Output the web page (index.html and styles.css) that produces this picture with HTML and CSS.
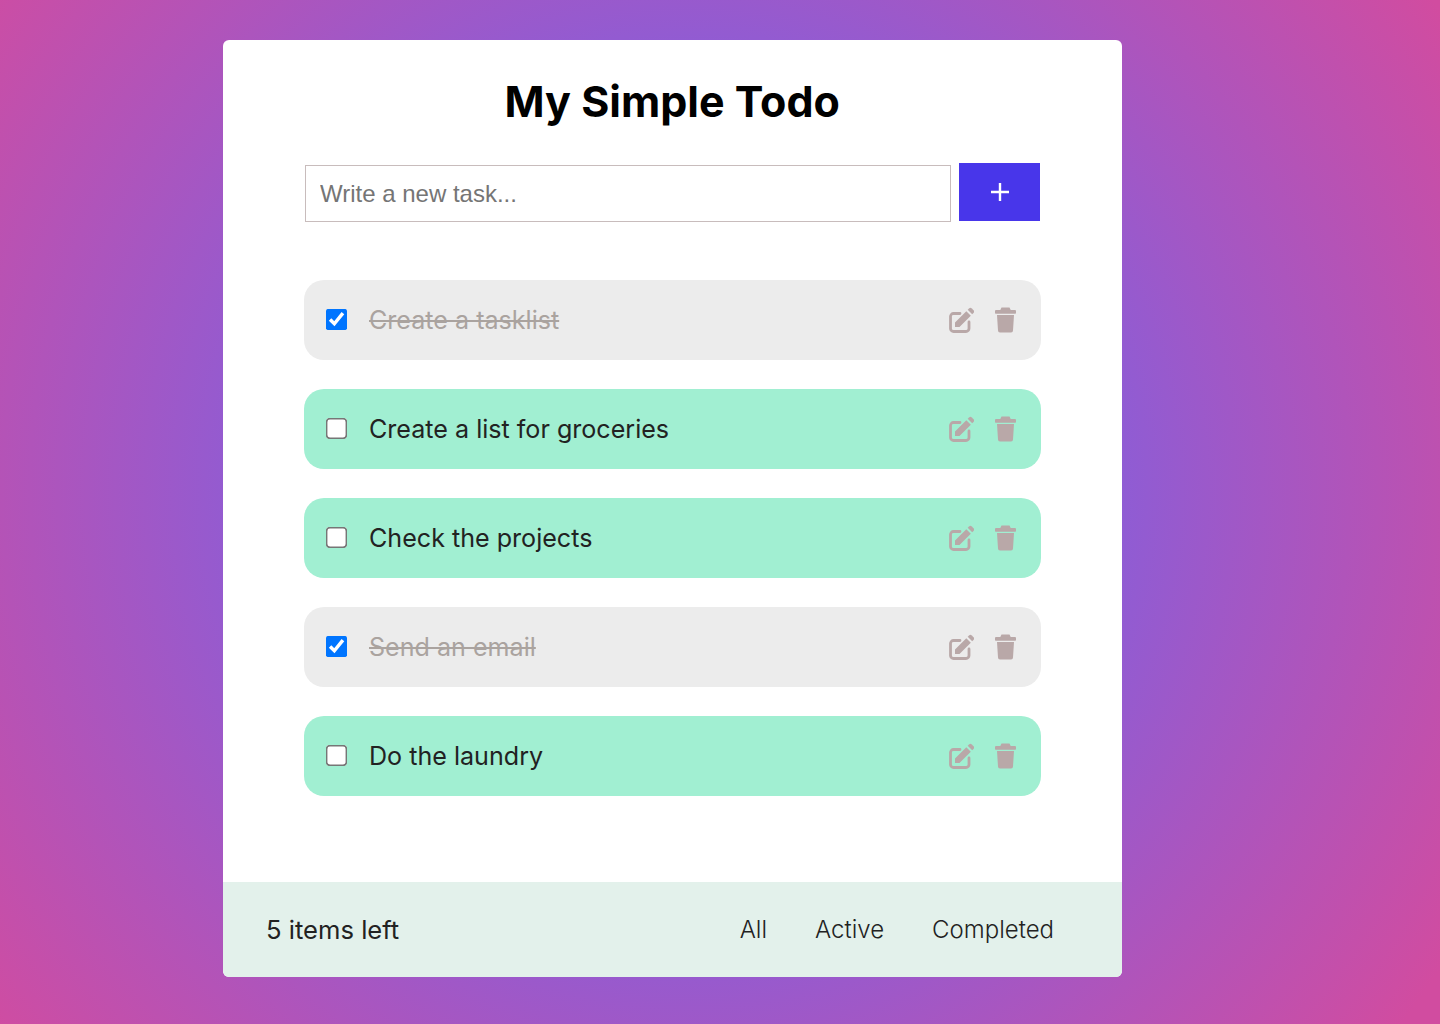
FILE: index.html
```html
<!DOCTYPE html>
<html>
<head>
  <title>My Simple Todo</title>
  <link rel="stylesheet" href="styles.css">
</head>
<body>
  <div class="card">
    <div class="content">
      <h1>My Simple Todo</h1>

      <form class="new-task">
        <input class="new-task-input" type="text" placeholder="Write a new task...">
        <button class="add-btn" type="button" aria-label="Add task">
          <svg width="20" height="20" viewBox="0 0 20 20"><path d="M10 1v18M1 10h18" stroke="#fff" stroke-width="2.4"/></svg>
        </button>
      </form>

      <ul class="tasks">
        <li class="task done">
          <input type="checkbox" checked>
          <span class="task-text">Create a tasklist</span>
          <svg class="icon" width="25" height="26"><use href="#edit"/></svg>
          <svg class="icon" width="21" height="26"><use href="#trash"/></svg>
        </li>
        <li class="task">
          <input type="checkbox">
          <span class="task-text">Create a list for groceries</span>
          <svg class="icon" width="25" height="26"><use href="#edit"/></svg>
          <svg class="icon" width="21" height="26"><use href="#trash"/></svg>
        </li>
        <li class="task">
          <input type="checkbox">
          <span class="task-text">Check the projects</span>
          <svg class="icon" width="25" height="26"><use href="#edit"/></svg>
          <svg class="icon" width="21" height="26"><use href="#trash"/></svg>
        </li>
        <li class="task done">
          <input type="checkbox" checked>
          <span class="task-text">Send an email</span>
          <svg class="icon" width="25" height="26"><use href="#edit"/></svg>
          <svg class="icon" width="21" height="26"><use href="#trash"/></svg>
        </li>
        <li class="task">
          <input type="checkbox">
          <span class="task-text">Do the laundry</span>
          <svg class="icon" width="25" height="26"><use href="#edit"/></svg>
          <svg class="icon" width="21" height="26"><use href="#trash"/></svg>
        </li>
      </ul>
    </div>

    <div class="footer">
      <span class="count">5 items left</span>
      <div class="filters">
        <a>All</a>
        <a>Active</a>
        <a>Completed</a>
      </div>
    </div>
  </div>

  <svg class="defs" width="0" height="0">
    <symbol id="edit" viewBox="0 0 25 26">
      <path d="M20 15v6.500a3 3 0 0 1-3 3H4.500a3 3 0 0 1-3-3V9.500a3 3 0 0 1 3-3H11" fill="none" stroke="currentColor" stroke-width="2.800" stroke-linecap="round"/>
      <path d="M6 15.500L17.300 4.200l4.500 4.500L10.500 20H6z" fill="currentColor"/>
      <path d="M18.700 2.800l1.300-1.300a2 2 0 0 1 2.800 0l1.700 1.700a2 2 0 0 1 0 2.800l-1.300 1.300z" fill="currentColor"/>
    </symbol>
    <symbol id="trash" viewBox="0 0 21 26">
      <path d="M6.500.5h8l1.200 2.500H20a1 1 0 0 1 1 1v2a.8.8 0 0 1-.8.8H.8A.8.8 0 0 1 0 6V4a1 1 0 0 1 1-1h4.300z" fill="currentColor"/>
      <path d="M2 8h17l-1 15.500a2 2 0 0 1-2 2H5a2 2 0 0 1-2-2z" fill="currentColor"/>
    </symbol>
  </svg>
</body>
</html>
```

FILE: styles.css
```css
* { box-sizing: border-box; }
html, body { height: 100%; }
body {
  margin: 0;
  padding-top: 40px;
  font-family: Inter, sans-serif;
  background: radial-gradient(circle at 690px 490px, #8f5cd4 430px, #d14ca0 890px);
  overflow: hidden;
}
.card {
  width: 898.500px;
  height: 937px;
  margin-left: 223px;
  background: #fff;
  border-radius: 6px;
  overflow: hidden;
  display: flex;
  flex-direction: column;
}
.content { flex: 1; padding: 0 81px; }
h1 {
  margin: 32px 0 0;
  font-size: 43px;
  line-height: 58px;
  font-weight: 700;
  text-align: center;
  color: #000;
}
.new-task { display: flex; gap: 8px; align-items: flex-start; margin-top: 33px; padding-left: 1px; }
.new-task-input {
  width: 646px;
  height: 57px;
  margin-top: 2px;
  padding: 0 14px;
  border: 1px solid #c8bcbc;
  font-family: "Liberation Sans", Arial, sans-serif;
  font-size: 24px;
  outline: none;
}
.new-task-input::placeholder { color: #757575; }
.add-btn {
  width: 81px;
  height: 58px;
  padding: 0;
  border: none;
  background: #4836ea;
  display: flex;
  align-items: center;
  justify-content: center;
}
.tasks { list-style: none; margin: 58px 0 0; padding: 0; display: flex; flex-direction: column; gap: 29px; }
.task {
  height: 80px;
  padding: 0 25px 0 22px;
  display: flex;
  align-items: center;
  background: #a1efd2;
  border-radius: 20px;
  color: #222;
  font-size: 25.100px;
}
.task.done { background: #ececec; }
.task input {
  width: 13px;
  height: 13px;
  margin: 0 26px 2px 4px;
  transform: scale(1.65);
  accent-color: #0075ff;
}
.task-text { flex: 1; }
.done .task-text { color: #aaa39f; text-decoration: line-through; }
.icon { color: #b9a8a8; margin: 0 0 1px 21px; }
.defs { position: absolute; }
.footer {
  height: 95px;
  padding: 0 67.500px 0 43px;
  display: flex;
  align-items: center;
  justify-content: space-between;
  background: #e3f1eb;
  font-size: 25.600px;
  color: #222;
}
.filters { display: flex; gap: 48px; font-size: 24px; font-weight: 300; }
```
